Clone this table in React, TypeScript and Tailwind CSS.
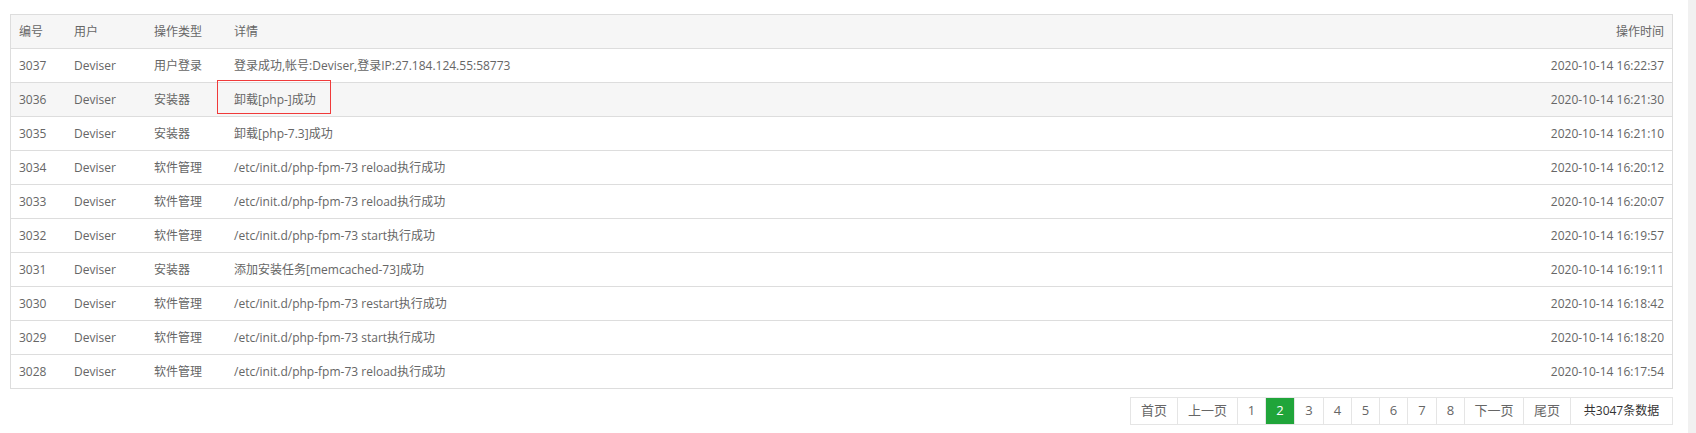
const logs = [
  { id: 3037, user: "Deviser", type: "用户登录", detail: "登录成功,帐号:Deviser,登录IP:27.184.124.55:58773", time: "2020-10-14 16:22:37" },
  { id: 3036, user: "Deviser", type: "安装器", detail: "卸载[php-]成功", time: "2020-10-14 16:21:30" },
  { id: 3035, user: "Deviser", type: "安装器", detail: "卸载[php-7.3]成功", time: "2020-10-14 16:21:10" },
  { id: 3034, user: "Deviser", type: "软件管理", detail: "/etc/init.d/php-fpm-73 reload执行成功", time: "2020-10-14 16:20:12" },
  { id: 3033, user: "Deviser", type: "软件管理", detail: "/etc/init.d/php-fpm-73 reload执行成功", time: "2020-10-14 16:20:07" },
  { id: 3032, user: "Deviser", type: "软件管理", detail: "/etc/init.d/php-fpm-73 start执行成功", time: "2020-10-14 16:19:57" },
  { id: 3031, user: "Deviser", type: "安装器", detail: "添加安装任务[memcached-73]成功", time: "2020-10-14 16:19:11" },
  { id: 3030, user: "Deviser", type: "软件管理", detail: "/etc/init.d/php-fpm-73 restart执行成功", time: "2020-10-14 16:18:42" },
  { id: 3029, user: "Deviser", type: "软件管理", detail: "/etc/init.d/php-fpm-73 start执行成功", time: "2020-10-14 16:18:20" },
  { id: 3028, user: "Deviser", type: "软件管理", detail: "/etc/init.d/php-fpm-73 reload执行成功", time: "2020-10-14 16:17:54" },
];

// page links, widths taken from the screenshot
const pages = [
  { label: "首页", w: "w-[47px]" },
  { label: "上一页", w: "w-[60px]" },
  { label: "1", w: "w-[28px]" },
  { label: "2", w: "w-[29px]", active: true },
  { label: "3", w: "w-[29px]" },
  { label: "4", w: "w-[28px]" },
  { label: "5", w: "w-[28px]" },
  { label: "6", w: "w-[28px]" },
  { label: "7", w: "w-[29px]" },
  { label: "8", w: "w-[28px]" },
  { label: "下一页", w: "w-[59px]" },
  { label: "尾页", w: "w-[47px]" },
];

const font = "font-['Open_Sans','Noto_Sans_CJK_SC',sans-serif]";

export default function App() {
  return (
    <div className={`flex min-h-[433px] bg-white ${font}`}>
      <div className="flex-1 pl-[10px] pr-[15px] pt-[14px]">
        <div className="border border-[#ddd] text-[12px] text-[#666]">
          <div className="flex h-[33px] items-center bg-[#f6f6f6]">
            <div className="w-[55px] pl-2">编号</div>
            <div className="w-[80px] pl-2">用户</div>
            <div className="w-[80px] pl-2">操作类型</div>
            <div className="flex-1 pl-2">详情</div>
            <div className="pr-2 text-right">操作时间</div>
          </div>
          {logs.map((log) => {
            const marked = log.id === 3036;
            return (
              <div
                key={log.id}
                className={`flex h-[34px] items-center border-t border-[#ddd] ${
                  marked ? "bg-[#f6f6f6]" : "bg-white"
                }`}
              >
                <div className="w-[55px] pl-2">{log.id}</div>
                <div className="w-[80px] pl-2">{log.user}</div>
                <div className="w-[80px] pl-2">{log.type}</div>
                <div className="relative flex h-full flex-1 items-center pl-2">
                  {log.detail}
                  {marked && (
                    <div className="absolute left-[-9px] top-[-3px] h-[34px] w-[114px] border border-[#f03a3a]" />
                  )}
                </div>
                <div className="pr-2 text-right">{log.time}</div>
              </div>
            );
          })}
        </div>

        <div className="mt-[8px] flex justify-end">
          <div className="flex h-[28px] text-[13px] text-[#666]">
            {pages.map((p) => (
              <span
                key={p.label}
                className={`flex items-center justify-center border-y border-l border-[#e5e5e5] ${p.w} ${
                  p.active ? "bg-[#20a53a] text-white" : "bg-white"
                }`}
              >
                {p.label}
              </span>
            ))}
            <span className="flex w-[103px] items-center justify-center border border-[#e5e5e5] text-[12px] text-[#333]">
              共3047条数据
            </span>
          </div>
        </div>
      </div>
      <div className="w-[8px] bg-[#f1f1f1]" />
    </div>
  );
}
